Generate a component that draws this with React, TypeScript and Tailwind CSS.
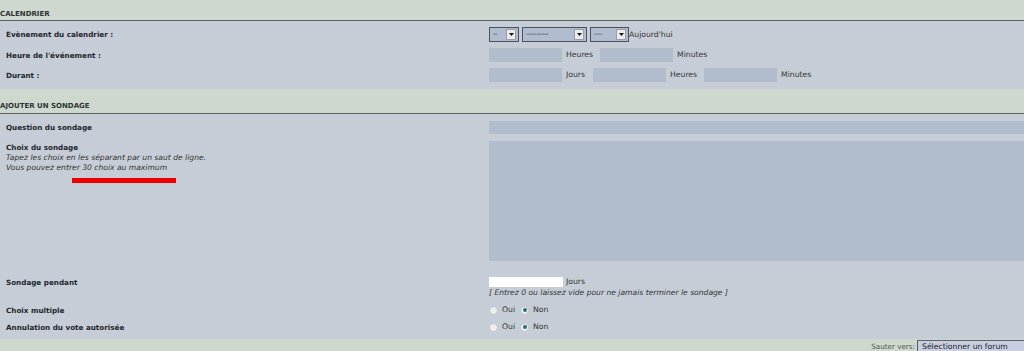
import React from "react";

function Sel({ w, text }: { w: string; text: string }) {
  return (
    <div className={`${w} h-[15px] border border-[#4a5260] bg-[#b2bccf] flex items-center justify-between pl-[3px] pr-[2px]`}>
      <span className="text-[7px] leading-[9px] text-[#333] tracking-[-0.5px]">{text}</span>
      <span className="w-[10px] h-[11px] bg-[#ececec] border border-[#9a9ea6] flex items-center justify-center">
        <svg width="5" height="3" viewBox="0 0 5 3"><path d="M0 0h5L2.5 3z" fill="#111" /></svg>
      </span>
    </div>
  );
}

function Inp({ w }: { w: string }) {
  return <div className={`${w} h-[14px] bg-[#b1bccd]`} />;
}

function Radio({ checked }: { checked?: boolean }) {
  return (
    <span className="inline-flex w-[9px] h-[9px] rounded-full border border-[#c2c6cc] bg-[#eceef0] items-center justify-center">
      {checked && <span className="w-[4px] h-[4px] rounded-full bg-[#2e6e78]" />}
    </span>
  );
}

const label = "text-[7.2px] font-bold text-[#23272e] leading-[9px]";
const norm = "text-[7.7px] text-[#333] leading-[10px]";
const ital = "text-[7.6px] italic leading-[10px] text-[#333]";

export default function App() {
  return (
    <div className="w-full h-[351px] bg-[#ced8ce] overflow-hidden font-['DejaVu_Sans',Verdana,sans-serif]">
      <div className="h-[20px] pt-[10px]">
        <div className="text-[7px] font-bold leading-[9px] text-[#2e3436]">CALENDRIER</div>
      </div>
      <div className="h-[1px] bg-[#5b6463]" />
      <div className="bg-[#c6cdd6] pt-[6px] pb-[7px]">
        <div className="flex h-[15px] items-center">
          <div className={`w-[489px] shrink-0 pl-[6px] ${label}`}>Evènement du calendrier :</div>
          <div className="flex items-center">
            <Sel w="w-[30px]" text="--" />
            <div className="w-[3px]" />
            <Sel w="w-[65px]" text="-----------" />
            <div className="w-[3px]" />
            <Sel w="w-[39px]" text="----" />
            <span className={norm}>Aujourd'hui</span>
          </div>
        </div>
        <div className="flex h-[14px] items-center mt-[6px]">
          <div className={`w-[489px] shrink-0 pl-[6px] ${label}`}>Heure de l'événement :</div>
          <div className="flex items-center">
            <Inp w="w-[73px]" />
            <span className={`${norm} ml-[4px] w-[34px]`}>Heures</span>
            <Inp w="w-[73px]" />
            <span className={`${norm} ml-[4px]`}>Minutes</span>
          </div>
        </div>
        <div className="flex h-[14px] items-center mt-[6px]">
          <div className={`w-[489px] shrink-0 pl-[6px] ${label}`}>Durant :</div>
          <div className="flex items-center">
            <Inp w="w-[73px]" />
            <span className={`${norm} ml-[4px] w-[27px]`}>Jours</span>
            <Inp w="w-[73px]" />
            <span className={`${norm} ml-[4px] w-[34px]`}>Heures</span>
            <Inp w="w-[73px]" />
            <span className={`${norm} ml-[4px]`}>Minutes</span>
          </div>
        </div>
      </div>
      <div className="h-[24px] pt-[13px]">
        <div className="text-[7px] font-bold leading-[9px] text-[#2e3436]">AJOUTER UN SONDAGE</div>
      </div>
      <div className="h-[1px] bg-[#5b6463]" />
      <div className="bg-[#c6cdd6] pt-[7px] pb-[6px]">
        <div className="flex h-[13px] items-center">
          <div className={`w-[489px] shrink-0 pl-[6px] ${label}`}>Question du sondage</div>
          <div className="flex-1 h-[13px] bg-[#b1bccd]" />
        </div>
        <div className="flex h-[120px] mt-[7px]">
          <div className="w-[489px] shrink-0 pl-[6px] pt-[2px]">
            <div className={label}>Choix du sondage</div>
            <div className={`${ital} mt-[1px]`}>Tapez les choix en les séparant par un saut de ligne.</div>
            <div className={ital}>Vous pouvez entrer 30 choix au maximum</div>
            <div className="ml-[66px] mt-[5px] w-[104px] h-[5px] bg-[#ee0000]" />
          </div>
          <div className="flex-1 bg-[#b1bccd]" />
        </div>
        <div className="flex h-[10px] items-center mt-[16px]">
          <div className={`w-[489px] shrink-0 pl-[6px] ${label}`}>Sondage pendant</div>
          <div className="flex items-center">
            <div className="w-[74px] h-[10px] bg-white" />
            <span className={`${norm} ml-[3px]`}>Jours</span>
          </div>
        </div>
        <div className="flex h-[10px] items-center mt-[1px]">
          <div className="w-[489px] shrink-0" />
          <div className={ital}>[ Entrez 0 ou laissez vide pour ne jamais terminer le sondage ]</div>
        </div>
        <div className="flex h-[12px] items-center mt-[6px]">
          <div className={`w-[489px] shrink-0 pl-[6px] ${label}`}>Choix multiple</div>
          <div className="flex items-center">
            <Radio />
            <span className={`${norm} ml-[4px] mr-[5px]`}>Oui</span>
            <Radio checked />
            <span className={`${norm} ml-[4px]`}>Non</span>
          </div>
        </div>
        <div className="flex h-[12px] items-center mt-[5px]">
          <div className={`w-[489px] shrink-0 pl-[6px] ${label}`}>Annulation du vote autorisée</div>
          <div className="flex items-center">
            <Radio />
            <span className={`${norm} ml-[4px] mr-[5px]`}>Oui</span>
            <Radio checked />
            <span className={`${norm} ml-[4px]`}>Non</span>
          </div>
        </div>
      </div>
      <div className="flex justify-end items-start pt-[1px] leading-[10px]">
        <span className="text-[7.2px] leading-[10px] text-[#555] mr-[2px] mt-[2px]">Sauter vers:</span>
        <div className="w-[107px] h-[12px] border-l border-t border-[#5a6068] bg-[#c9cee0] pl-[4px] flex items-center">
          <span className="text-[7.7px] leading-[10px] text-[#222]">Sélectionner un forum</span>
        </div>
      </div>
    </div>
  );
}
